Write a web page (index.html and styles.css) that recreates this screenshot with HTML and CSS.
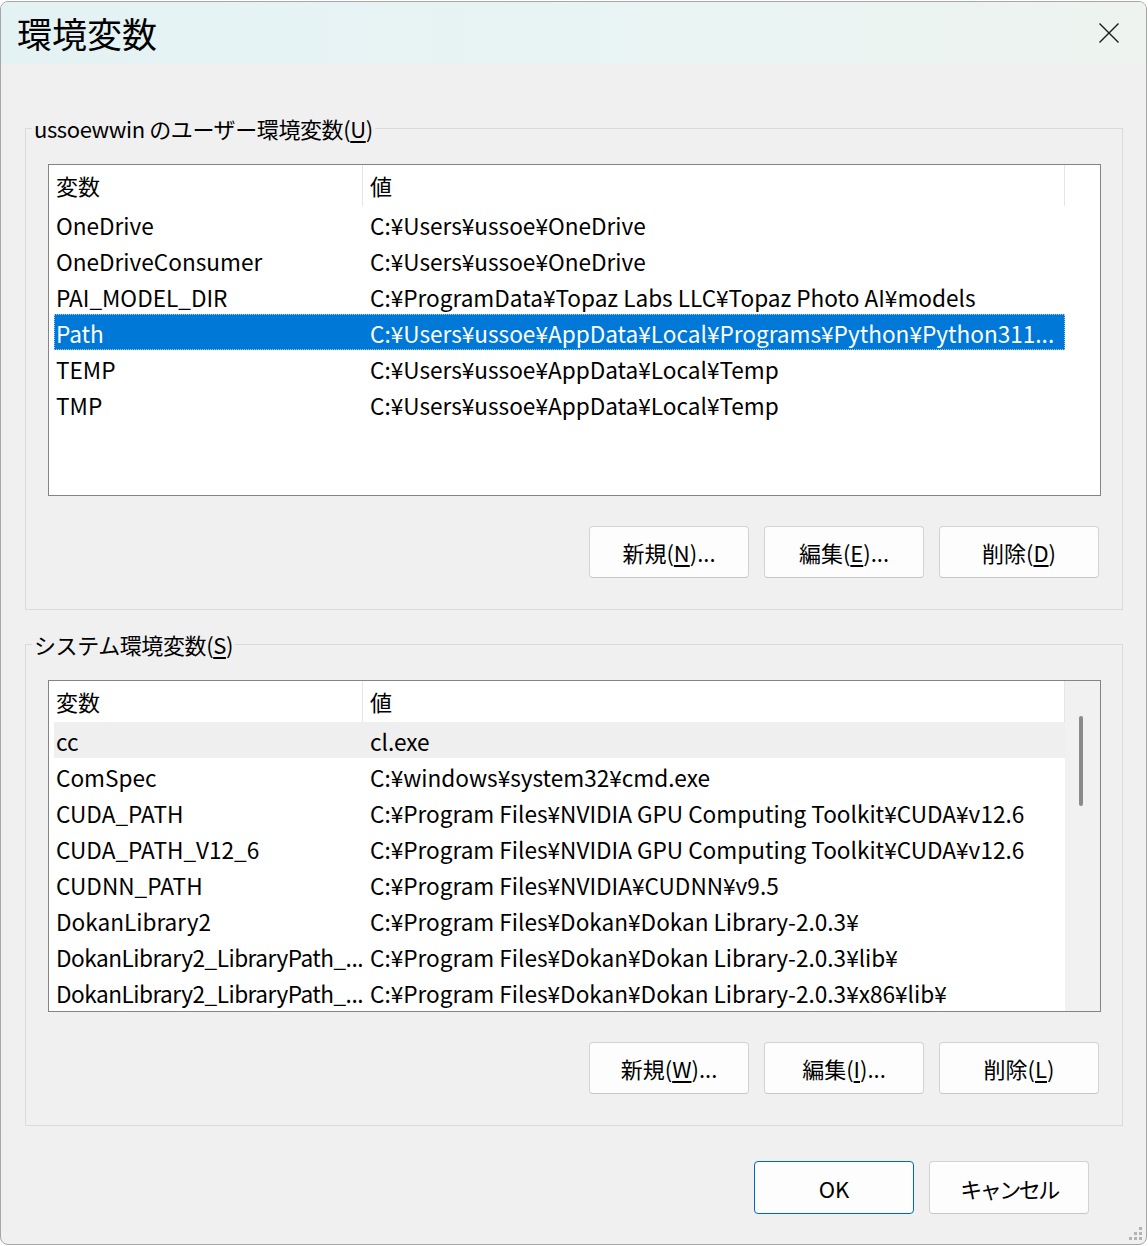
FILE: index.html
```html
<!DOCTYPE html>
<html lang="ja">
<head>
    <meta charset="UTF-8">
    <meta name="viewport" content="width=device-width, initial-scale=1.0">
    <title>環境変数</title>

    <link rel="stylesheet" href="styles.css">
</head>
<body>

    <div class="window">

        <div class="titlebar">
            <span class="title">環境変数</span>
            <button class="close" aria-label="閉じる">
                <svg width="20" height="20" viewBox="0 0 20 20">
                    <path d="M0.5 0.5L19.5 19.5M19.5 0.5L0.5 19.5" stroke="#1b1b1b" stroke-width="1.4" fill="none"/>
                </svg>
            </button>
        </div>

        <div class="content">

            <!-- User variables -->
            <fieldset class="group">
                <legend>ussoewwin のユーザー環境変数(<u>U</u>)</legend>

                <div class="list">
                    <div class="list-body">
                        <div class="list-head">
                            <div class="col-name">変数</div>
                            <div class="col-value">値</div>
                        </div>
                        <div class="row"><div class="col-name">OneDrive</div><div class="col-value">C:¥Users¥ussoe¥OneDrive</div></div>
                        <div class="row"><div class="col-name">OneDriveConsumer</div><div class="col-value">C:¥Users¥ussoe¥OneDrive</div></div>
                        <div class="row"><div class="col-name">PAI_MODEL_DIR</div><div class="col-value">C:¥ProgramData¥Topaz Labs LLC¥Topaz Photo AI¥models</div></div>
                        <div class="row selected"><div class="col-name">Path</div><div class="col-value">C:¥Users¥ussoe¥AppData¥Local¥Programs¥Python¥Python311...</div></div>
                        <div class="row"><div class="col-name">TEMP</div><div class="col-value">C:¥Users¥ussoe¥AppData¥Local¥Temp</div></div>
                        <div class="row"><div class="col-name">TMP</div><div class="col-value">C:¥Users¥ussoe¥AppData¥Local¥Temp</div></div>
                    </div>
                </div>

                <div class="actions">
                    <button>新規(<u>N</u>)...</button>
                    <button>編集(<u>E</u>)...</button>
                    <button>削除(<u>D</u>)</button>
                </div>
            </fieldset>

            <!-- System variables -->
            <fieldset class="group">
                <legend>システム環境変数(<u>S</u>)</legend>

                <div class="list">
                    <div class="list-body">
                        <div class="list-head">
                            <div class="col-name">変数</div>
                            <div class="col-value">値</div>
                        </div>
                        <div class="row hover"><div class="col-name">cc</div><div class="col-value">cl.exe</div></div>
                        <div class="row"><div class="col-name">ComSpec</div><div class="col-value">C:¥windows¥system32¥cmd.exe</div></div>
                        <div class="row"><div class="col-name">CUDA_PATH</div><div class="col-value">C:¥Program Files¥NVIDIA GPU Computing Toolkit¥CUDA¥v12.6</div></div>
                        <div class="row"><div class="col-name">CUDA_PATH_V12_6</div><div class="col-value">C:¥Program Files¥NVIDIA GPU Computing Toolkit¥CUDA¥v12.6</div></div>
                        <div class="row"><div class="col-name">CUDNN_PATH</div><div class="col-value">C:¥Program Files¥NVIDIA¥CUDNN¥v9.5</div></div>
                        <div class="row"><div class="col-name">DokanLibrary2</div><div class="col-value">C:¥Program Files¥Dokan¥Dokan Library-2.0.3¥</div></div>
                        <div class="row"><div class="col-name trimmed">DokanLibrary2_LibraryPath_...</div><div class="col-value">C:¥Program Files¥Dokan¥Dokan Library-2.0.3¥lib¥</div></div>
                        <div class="row"><div class="col-name trimmed">DokanLibrary2_LibraryPath_...</div><div class="col-value">C:¥Program Files¥Dokan¥Dokan Library-2.0.3¥x86¥lib¥</div></div>
                    </div>
                    <div class="scrollbar">
                        <div class="thumb"></div>
                    </div>
                </div>

                <div class="actions">
                    <button>新規(<u>W</u>)...</button>
                    <button>編集(<u>I</u>)...</button>
                    <button>削除(<u>L</u>)</button>
                </div>
            </fieldset>

            <div class="dialog-actions">
                <button class="primary">OK</button>
                <button class="kana">キャンセル</button>
            </div>
        </div>

        <!-- resize grip -->
        <svg class="grip" width="16" height="14" viewBox="0 0 16 14">
            <rect x="13" y="1" width="3" height="3" fill="#b4b4b4"/>
            <rect x="8" y="6" width="3" height="3" fill="#b4b4b4"/>
            <rect x="13" y="6" width="3" height="3" fill="#b4b4b4"/>
            <rect x="3" y="11" width="3" height="3" fill="#b4b4b4"/>
            <rect x="8" y="11" width="3" height="3" fill="#b4b4b4"/>
            <rect x="13" y="11" width="3" height="3" fill="#b4b4b4"/>
        </svg>
    </div>

</body>
</html>
```

FILE: styles.css
```css
body {
    margin: 0;
    background: #ffffff;
    font-family: "Noto Sans CJK JP", "Noto Sans", sans-serif;
    color: #000;
}

.window {
    position: relative;
    width: 1147px;
    height: 1244px;
    margin-top: 1px;
    box-sizing: border-box;
    border: 1px solid #a6a6a6;
    border-radius: 8px;
    background: #f0f0f0;
    overflow: hidden;
}

.titlebar {
    height: 62px;
    display: flex;
    align-items: center;
    justify-content: space-between;
    padding: 0 27px 0 16px;
    background: linear-gradient(90deg, #e4f2f4, #e9f4f3 60%, #eef3ef);
}

.title {
    font-size: 35px;
    line-height: 62px;
}

.close {
    display: flex;
    padding: 0;
    border: none;
    background: none;
}

.content {
    padding: 49px 23px 0 24px;
}

.group {
    margin: 0;
    min-width: 0;
    border: 1px solid #dadada;
    padding: 0 21px 31px 22px;
}

.group + .group {
    margin-top: 19px;
}

.group legend {
    margin-left: -16px;
    padding: 0 2px;
    font-size: 22px;
    line-height: 30px;
    letter-spacing: -0.4px;
}

u {
    text-underline-offset: 3px;
}

.list {
    display: flex;
    height: 332px;
    box-sizing: border-box;
    margin-top: 21px;
    border: 1px solid #848484;
    background: #ffffff;
    font-size: 22px;
}

.list-body {
    width: 1016px;
    padding-left: 5px;
    box-sizing: border-box;
}

.list-head, .row {
    display: grid;
    grid-template-columns: 309px 702px;
    white-space: nowrap;
}

.list-head {
    height: 41px;
    line-height: 41px;
}

.list-head .col-name, .list-head .col-value {
    border-right: 1px solid #e5e5e5;
}

.row {
    height: 36px;
    padding-top: 4px;
    line-height: 32px;
    box-sizing: border-box;
    font-size: 22.6px;
}

.col-name {
    padding-left: 2px;
    overflow: hidden;
}

.col-name.trimmed {
    letter-spacing: -0.5px;
}

.col-value {
    padding-left: 7px;
    overflow: hidden;
}

.row.selected {
    background: #0078d7;
    color: #ffffff;
    outline: 1px dotted #a9cbe9;
    outline-offset: -1px;
}

.row.hover {
    background: #efefef;
}

.scrollbar {
    flex: 1;
    background: #f1f1f1;
}

.thumb {
    width: 4px;
    height: 90px;
    margin: 35px 0 0 14px;
    border-radius: 2px;
    background: #8a8a8a;
}

.actions, .dialog-actions {
    display: flex;
    justify-content: flex-end;
    gap: 15px;
}

.actions {
    margin-top: 30px;
    padding-right: 2px;
}

.dialog-actions {
    margin-top: 35px;
    padding-right: 34px;
}

button {
    font-family: "Noto Sans CJK JP", "Noto Sans", sans-serif;
    color: #000;
}

.actions button, .dialog-actions button {
    width: 160px;
    height: 52px;
    padding: 0;
    font-size: 22px;
    background: #fdfdfd;
    border: 1px solid #d3d3d3;
    border-bottom-color: #c6c6c6;
    border-radius: 4px;
}

.dialog-actions button {
    height: 53px;
}

.dialog-actions .primary {
    border: 1px solid #0067c0;
}

.dialog-actions .kana {
    letter-spacing: -2.5px;
}

.grip {
    position: absolute;
    right: 4px;
    bottom: 4px;
}
```
